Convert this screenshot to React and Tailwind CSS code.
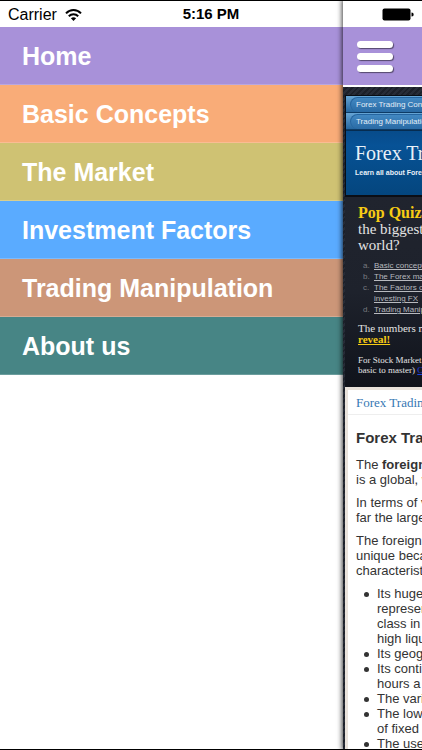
const menuItems = [
  { label: "Home", color: "bg-[#a891d9]" },
  { label: "Basic Concepts", color: "bg-[#f9ac78]" },
  { label: "The Market", color: "bg-[#cfc273]" },
  { label: "Investment Factors", color: "bg-[#5aabff]" },
  { label: "Trading Manipulation", color: "bg-[#cc9678]" },
  { label: "About us", color: "bg-[#478585]" },
];

const tabs = ["Forex Trading Concepts", "Trading Manipulation"];

const features = [
  ["Its huge trading", "representing", "class in the", "high liquidity"],
  ["Its geographical"],
  ["Its continuous", "hours a day"],
  ["The variety"],
  ["The low margins", "of fixed income"],
  ["The use of"],
];

function StatusBar() {
  return (
    <div className="absolute inset-x-0 top-0 z-20 grid h-7 grid-cols-3 items-center border-t border-black px-2 text-base text-black">
      <div className="flex items-center gap-2">
        <span>Carrier</span>
        <svg width="17" height="12" viewBox="0 0 17 12" fill="none" stroke="#000" strokeWidth="2">
          <path d="M1 4.4C5.2 0 11.8 0 16 4.4" />
          <path d="M3.8 7.2C6.4 4.5 10.6 4.5 13.2 7.2" />
          <path d="M8.5 12L5.9 9.3C7.3 7.9 9.7 7.9 11.1 9.3Z" fill="#000" stroke="none" />
        </svg>
      </div>
      <span className="text-center text-[15px] font-bold">5:16 PM</span>
      <svg className="justify-self-end" width="32" height="13" viewBox="0 0 32 13">
        <rect x="0.5" y="0.5" width="28" height="12" rx="2" />
        <path d="M29.5 4.5C31.3 4.5 31.6 5.5 31.6 6.5S31.3 8.5 29.5 8.5Z" />
      </svg>
    </div>
  );
}

function SideMenu() {
  return (
    <nav className="min-w-0 flex-1 bg-white pt-[27px]">
      <ul>
        {menuItems.map((item) => (
          <li key={item.label} className={item.color}>
            <a
              href="#"
              className="flex h-[58px] items-center border-b border-white/20 pl-[22px] pt-[3px] text-[25px] font-bold text-white"
            >
              {item.label}
            </a>
          </li>
        ))}
      </ul>
    </nav>
  );
}

function Quiz() {
  return (
    <section className="h-[192px] shrink-0 border-t-2 border-[#0b0e15] bg-linear-to-b from-[#20242e] via-[#1e222c] to-[#10131b] pl-[13px] pt-2 font-['Liberation_Serif',serif] text-[#e4e4e4]">
      <p className="text-[15px] leading-4">
        <b className="text-base leading-4 text-[#f7cb14]">Pop Quiz:</b> What is
        <br />
        the biggest market in the
        <br />
        world?
      </p>
      <ol className="mt-[7px] grid grid-cols-[11px_auto] pl-[5px] font-['Liberation_Sans',sans-serif] text-[8px] leading-[11px] text-[#b8babf]">
        <li className="contents">
          <span className="text-[#777a80]">a.</span>
          <a href="#" className="underline">Basic concepts</a>
        </li>
        <li className="contents">
          <span className="text-[#777a80]">b.</span>
          <a href="#" className="underline">The Forex market</a>
        </li>
        <li className="contents">
          <span className="text-[#777a80]">c.</span>
          <a href="#" className="underline">
            The Factors of
            <br />
            investing FX
          </a>
        </li>
        <li className="contents">
          <span className="text-[#777a80]">d.</span>
          <a href="#" className="underline">Trading Manipulation</a>
        </li>
      </ol>
      <p className="mt-2 text-[11px] leading-[11px]">
        The numbers may
        <br />
        <a href="#" className="font-bold text-[#f7cb14] underline">reveal!</a>
      </p>
      <p className="mt-[10px] text-[9px] leading-[10px]">
        For Stock Market (from
        <br />
        basic to master) <a href="#" className="text-[#1f3fe0] underline">Click</a>
      </p>
    </section>
  );
}

function Article() {
  return (
    <section className="flex-1 overflow-hidden border-l-3 border-t-3 border-[#e9e2db] bg-white text-[13px] leading-[15px] text-[#333]">
      <div className="border-b border-[#eee] pb-[3px] pl-2 pt-1 font-['Liberation_Serif',serif] text-[13px] leading-[17px]">
        <a href="#" className="text-[#3678b4]">Forex Trading</a>
      </div>
      <div className="pl-2 pt-[15px]">
        <h2 className="text-[15px] font-bold leading-4">Forex Trading</h2>
        <p className="mt-[11px]">
          The <b>foreign exchange</b>
          <br />
          is a global, worldwide
        </p>
        <p className="mt-2">
          In terms of volume
          <br />
          far the largest
        </p>
        <p className="mt-2">
          The foreign exchange
          <br />
          unique because
          <br />
          characteristics
        </p>
        <ul className="mt-2 pl-2">
          {features.map((lines) => (
            <li key={lines[0]} className="flex gap-2">
              <span className="mt-[6px] size-[5px] shrink-0 rounded-full bg-[#333]" />
              <div>
                {lines.map((line) => (
                  <p key={line}>{line}</p>
                ))}
              </div>
            </li>
          ))}
        </ul>
      </div>
    </section>
  );
}

function WebPage() {
  return (
    <main className="z-10 flex w-[79px] shrink-0 flex-col overflow-hidden whitespace-nowrap bg-white pt-[27px] shadow-[0_0_5px_1px_rgba(0,0,0,0.75)]">
      <header className="flex h-[60px] shrink-0 items-center border-b-2 border-white bg-[#a891d9] pl-[14px]">
        <button type="button" aria-label="Menu" className="flex flex-col gap-[5px]">
          <span className="h-[7px] w-9 rounded-full bg-white shadow-[1px_1px_1px_rgba(0,0,0,0.5)]" />
          <span className="h-[7px] w-9 rounded-full bg-white shadow-[1px_1px_1px_rgba(0,0,0,0.5)]" />
          <span className="h-[7px] w-9 rounded-full bg-white shadow-[1px_1px_1px_rgba(0,0,0,0.5)]" />
        </button>
      </header>
      <div className="flex min-h-0 flex-1 flex-col bg-[repeating-linear-gradient(135deg,#272c37_0px,#272c37_2px,#1c2029_2px,#1c2029_4px)] pl-[2px] pt-2">
        <div className="h-[100px] shrink-0 border-l border-t border-[#090d14] bg-linear-to-b from-[#073c70] via-[#075296] to-[#04467e]">
          <ul className="border-b border-[#062c50] bg-[#3c82ba]">
            {tabs.map((tab) => (
              <li key={tab} className="h-[17px] border-b border-[#0d3b66] bg-linear-to-b from-[#66a5d5] to-[#2567a0] py-px pl-1">
                <a
                  href="#"
                  className="block rounded-l-full border-l border-t border-[#2565a0] bg-linear-to-b from-[#4288c2] to-[#2a6ba5] pl-[5px] text-[8px] leading-[14px] text-[#e3eef7]"
                >
                  {tab}
                </a>
              </li>
            ))}
          </ul>
          <div className="pl-[9px] pt-[10px] text-[#e8f0f8]">
            <h1 className="font-['Liberation_Serif',serif] text-[20px] leading-6">
              Forex Trading
            </h1>
            <p className="mt-[3px] text-[7px] font-bold leading-[10px]">Learn all about Forex</p>
          </div>
        </div>
        <Quiz />
        <Article />
      </div>
    </main>
  );
}

export default function App() {
  return (
    <div className="relative flex h-screen overflow-hidden border-b border-black bg-white font-['Liberation_Sans',Arial,sans-serif]">
      <StatusBar />
      <SideMenu />
      <WebPage />
    </div>
  );
}
